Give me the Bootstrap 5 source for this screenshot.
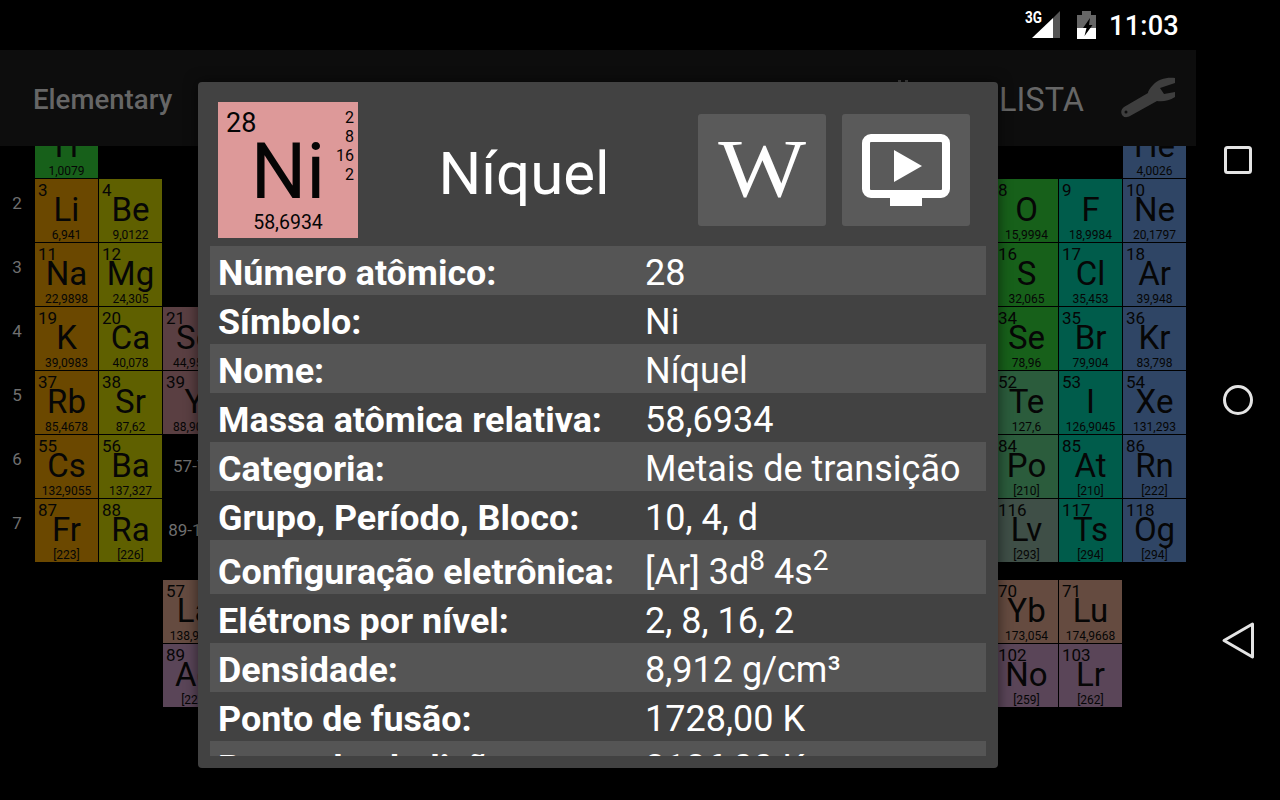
<!DOCTYPE html>
<html lang="pt">
<head>
<meta charset="utf-8">
<link href="https://cdn.jsdelivr.net/npm/bootstrap@5.3.0/dist/css/bootstrap.min.css" rel="stylesheet">
<style>
html,body{margin:0;background:#000;font-family:Roboto,"Liberation Sans",sans-serif;width:1280px;height:800px;overflow:hidden}
.screen{width:1280px;height:800px;position:relative}
.app-col{width:1196px;height:800px}
.nav-col{width:84px;height:800px}
.status-bar{height:50px;padding-right:17px;flex:none}
.clock{font-size:27.2px;font-weight:500;color:#fff;line-height:50px;margin-left:13.500px;margin-top:1px;letter-spacing:.2px}
.action-bar{height:96px;background:#0d0d0d;color:#666;padding:0 20px 0 33px;flex:none}
.app-title{font-size:27.6px;font-weight:500;line-height:1;margin-top:4px}
.tab-marks{margin-left:auto;margin-right:91px;align-self:flex-start;margin-top:30px;flex:none}
.tab-lista{font-size:32.500px;font-weight:400;line-height:1;margin-right:36px;margin-top:4px}
.content-area{height:654px;overflow:hidden;flex:none}
.ptable{display:grid;grid-template-columns:34px repeat(18,63px);grid-template-rows:repeat(7,63px) 16px repeat(2,63px);gap:1px;margin-top:-31px}
.cell{height:63px;padding-top:3px;color:#060606;text-align:center;overflow:hidden;white-space:nowrap}
.cnum{display:block;font-size:17px;line-height:17px;text-align:left;padding-left:3px}
.csym{display:block;font-size:33px;line-height:36px;margin-top:-7px}
.cmass{display:block;font-size:12px;line-height:13px;margin-top:1px}
.plabel{grid-column:1;color:#6f6f6f;font-size:17px;text-align:center;padding-bottom:14px;align-self:center}
.series{color:#6f6f6f;font-size:17px;align-self:center;text-align:center;white-space:nowrap;grid-column:4}
.c1{grid-column:2}.c2{grid-column:3}.c3{grid-column:4}.c16{grid-column:17}.c17{grid-column:18}.c18{grid-column:19}
.r1{grid-row:1}.r2{grid-row:2}.r3{grid-row:3}.r4{grid-row:4}.r5{grid-row:5}.r6{grid-row:6}.r7{grid-row:7}.r9{grid-row:9}.r10{grid-row:10}
.f-alk{background:#6b4800}.f-ear{background:#5f6000}.f-tra{background:#5a3f42}.f-lan{background:#654b40}.f-act{background:#5a4558}
.f-non{background:#17601a}.f-hal{background:#005c4b}.f-nob{background:#2f4565}.f-met{background:#2b5c3c}.f-unk{background:#3f4f47}
.dialog-box{position:absolute;left:198px;top:82px;width:800px;height:686px;background:#424242;border-radius:4px;box-shadow:0 0 14px rgba(0,0,0,.55);padding:20px 12px 12px;color:#fff}
.head-row{height:144px;flex:none}
.tile{width:140px;height:136px;background:#dd9999;color:#050505;margin-left:8px;position:relative;flex:none}
.t-num{position:absolute;left:8px;top:5px;font-size:27px;line-height:32px}
.t-sym{position:absolute;left:0;right:0;top:25px;text-align:center;font-size:78px;line-height:90px}
.t-mass{position:absolute;left:0;right:0;bottom:2.500px;text-align:center;font-size:19.500px;line-height:26px}
.t-shell{position:absolute;right:4px;top:6px;text-align:right;font-size:16px;line-height:19px}
.el-name{font-size:60px;line-height:1;width:332px;text-align:center;flex:none}
.sq-btn{width:128px;height:112px;background:#5a5a5a;border-radius:3px;flex:none;margin-top:12px}
.wiki-w{font-family:"Liberation Serif",serif;font-size:83px;line-height:1;color:#fff;display:block;transform:scaleX(1.12);margin-top:-3px}
.btn-end-gap{width:16px;flex:none}
.scroller{height:510px;overflow:hidden;flex:none;width:776px}
.info-row{height:49px;padding-left:8px;line-height:55px;white-space:nowrap}
.info-row.odd{background:#555}
.info-row.tall{height:54px;line-height:64px}
.lab{width:428px;flex:none;font-size:35.900px;font-weight:700;margin-right:-1px}
.val{font-size:36px;font-weight:400}
.val sup{font-size:28px;top:-.5em;line-height:0}
.back-ico{display:block}
</style>
</head>
<body>
<div class="screen d-flex">
  <div class="app-col d-flex flex-column">
    <div class="status-bar d-flex justify-content-end align-items-center">
      <svg width="36" height="30" viewBox="0 0 36 30" aria-label="3G">
        <polygon points="7,28 28,8 28,28" fill="#fff"/>
        <polygon points="28,8 35,1 35,28 28,28" fill="#555"/>
        <text x="0" y="13" font-family="Roboto" font-weight="700" font-size="16" textLength="17" lengthAdjust="spacingAndGlyphs" fill="#fff">3G</text>
      </svg>
      <svg width="19" height="28" viewBox="0 0 19 28" class="ms-3" aria-label="bateria">
        <path d="M5 0h9v4h5v24H0V4h5z" fill="#666"/>
        <path d="M0 17h19v11H0z" fill="#fff"/>
        <path d="M13 7 6 17h3.500l-2 8 8-11H12z" fill="#000"/>
      </svg>
      <span class="clock">11:03</span>
    </div>
    <div class="action-bar d-flex align-items-center">
      <span class="app-title">Elementary</span>
      <svg class="tab-marks" width="10" height="2" viewBox="0 0 10 2" aria-hidden="true"><rect width="3" height="2" fill="#444"/><rect x="7" width="3" height="2" fill="#444"/></svg>
      <span class="tab-lista">LISTA</span>
      <svg width="56" height="42" viewBox="0 0 56 42" aria-label="Ajustes">
        <path d="M55 1C47 0 38 2 33 8 30 11 28 14 28 16L4 30C0 33 1 37 3 39 5 41 8 40 10 39L37 24C42 25 49 24 55 20V15L44 17 40 11 55 6Z" fill="#3e3e3e"/>
        <circle cx="6" cy="35" r="1.500" fill="#0d0d0d"/>
      </svg>
    </div>
    <div class="content-area">
      <div class="ptable">
        <span class="plabel r2">2</span><span class="plabel r3">3</span><span class="plabel r4">4</span><span class="plabel r5">5</span><span class="plabel r6">6</span><span class="plabel r7">7</span>

        <div class="cell c1 r1 f-non"><span class="cnum">1</span><span class="csym">H</span><span class="cmass">1,0079</span></div>
        <div class="cell c18 r1 f-nob"><span class="cnum">2</span><span class="csym">He</span><span class="cmass">4,0026</span></div>

        <div class="cell c1 r2 f-alk"><span class="cnum">3</span><span class="csym">Li</span><span class="cmass">6,941</span></div>
        <div class="cell c2 r2 f-ear"><span class="cnum">4</span><span class="csym">Be</span><span class="cmass">9,0122</span></div>
        <div class="cell c16 r2 f-non"><span class="cnum">8</span><span class="csym">O</span><span class="cmass">15,9994</span></div>
        <div class="cell c17 r2 f-hal"><span class="cnum">9</span><span class="csym">F</span><span class="cmass">18,9984</span></div>
        <div class="cell c18 r2 f-nob"><span class="cnum">10</span><span class="csym">Ne</span><span class="cmass">20,1797</span></div>

        <div class="cell c1 r3 f-alk"><span class="cnum">11</span><span class="csym">Na</span><span class="cmass">22,9898</span></div>
        <div class="cell c2 r3 f-ear"><span class="cnum">12</span><span class="csym">Mg</span><span class="cmass">24,305</span></div>
        <div class="cell c16 r3 f-non"><span class="cnum">16</span><span class="csym">S</span><span class="cmass">32,065</span></div>
        <div class="cell c17 r3 f-hal"><span class="cnum">17</span><span class="csym">Cl</span><span class="cmass">35,453</span></div>
        <div class="cell c18 r3 f-nob"><span class="cnum">18</span><span class="csym">Ar</span><span class="cmass">39,948</span></div>

        <div class="cell c1 r4 f-alk"><span class="cnum">19</span><span class="csym">K</span><span class="cmass">39,0983</span></div>
        <div class="cell c2 r4 f-ear"><span class="cnum">20</span><span class="csym">Ca</span><span class="cmass">40,078</span></div>
        <div class="cell c3 r4 f-tra"><span class="cnum">21</span><span class="csym">Sc</span><span class="cmass">44,9559</span></div>
        <div class="cell c16 r4 f-non"><span class="cnum">34</span><span class="csym">Se</span><span class="cmass">78,96</span></div>
        <div class="cell c17 r4 f-hal"><span class="cnum">35</span><span class="csym">Br</span><span class="cmass">79,904</span></div>
        <div class="cell c18 r4 f-nob"><span class="cnum">36</span><span class="csym">Kr</span><span class="cmass">83,798</span></div>

        <div class="cell c1 r5 f-alk"><span class="cnum">37</span><span class="csym">Rb</span><span class="cmass">85,4678</span></div>
        <div class="cell c2 r5 f-ear"><span class="cnum">38</span><span class="csym">Sr</span><span class="cmass">87,62</span></div>
        <div class="cell c3 r5 f-tra"><span class="cnum">39</span><span class="csym">Y</span><span class="cmass">88,9059</span></div>
        <div class="cell c16 r5 f-met"><span class="cnum">52</span><span class="csym">Te</span><span class="cmass">127,6</span></div>
        <div class="cell c17 r5 f-hal"><span class="cnum">53</span><span class="csym">I</span><span class="cmass">126,9045</span></div>
        <div class="cell c18 r5 f-nob"><span class="cnum">54</span><span class="csym">Xe</span><span class="cmass">131,293</span></div>

        <div class="cell c1 r6 f-alk"><span class="cnum">55</span><span class="csym">Cs</span><span class="cmass">132,9055</span></div>
        <div class="cell c2 r6 f-ear"><span class="cnum">56</span><span class="csym">Ba</span><span class="cmass">137,327</span></div>
        <span class="series r6">57-71</span>
        <div class="cell c16 r6 f-met"><span class="cnum">84</span><span class="csym">Po</span><span class="cmass">[210]</span></div>
        <div class="cell c17 r6 f-hal"><span class="cnum">85</span><span class="csym">At</span><span class="cmass">[210]</span></div>
        <div class="cell c18 r6 f-nob"><span class="cnum">86</span><span class="csym">Rn</span><span class="cmass">[222]</span></div>

        <div class="cell c1 r7 f-alk"><span class="cnum">87</span><span class="csym">Fr</span><span class="cmass">[223]</span></div>
        <div class="cell c2 r7 f-ear"><span class="cnum">88</span><span class="csym">Ra</span><span class="cmass">[226]</span></div>
        <span class="series r7">89-103</span>
        <div class="cell c16 r7 f-unk"><span class="cnum">116</span><span class="csym">Lv</span><span class="cmass">[293]</span></div>
        <div class="cell c17 r7 f-hal"><span class="cnum">117</span><span class="csym">Ts</span><span class="cmass">[294]</span></div>
        <div class="cell c18 r7 f-nob"><span class="cnum">118</span><span class="csym">Og</span><span class="cmass">[294]</span></div>

        <div class="cell c3 r9 f-lan"><span class="cnum">57</span><span class="csym">La</span><span class="cmass">138,9055</span></div>
        <div class="cell c16 r9 f-lan"><span class="cnum">70</span><span class="csym">Yb</span><span class="cmass">173,054</span></div>
        <div class="cell c17 r9 f-lan"><span class="cnum">71</span><span class="csym">Lu</span><span class="cmass">174,9668</span></div>
        <div class="cell c3 r10 f-act"><span class="cnum">89</span><span class="csym">Ac</span><span class="cmass">[227]</span></div>
        <div class="cell c16 r10 f-act"><span class="cnum">102</span><span class="csym">No</span><span class="cmass">[259]</span></div>
        <div class="cell c17 r10 f-act"><span class="cnum">103</span><span class="csym">Lr</span><span class="cmass">[262]</span></div>
      </div>
    </div>
  </div>
  <div class="nav-col d-flex flex-column align-items-center">
    <svg width="84" height="800" viewBox="0 0 84 800" aria-label="navegação" class="back-ico">
      <rect x="29.500" y="147.500" width="25" height="25" rx="2" fill="none" stroke="#e4e4e4" stroke-width="3"/>
      <circle cx="42" cy="400" r="13.500" fill="none" stroke="#e4e4e4" stroke-width="3"/>
      <path d="M56.500 624 L28 640.500 L56.500 657 Z" fill="none" stroke="#e4e4e4" stroke-width="3" stroke-linejoin="round"/>
    </svg>
  </div>

  <div class="dialog-box d-flex flex-column">
    <div class="head-row d-flex">
      <div class="tile">
        <span class="t-num">28</span>
        <span class="t-sym">Ni</span>
        <span class="t-mass">58,6934</span>
        <span class="t-shell">2<br>8<br>16<br>2</span>
      </div>
      <div class="el-name align-self-center">Níquel</div>
      <div class="sq-btn d-flex align-items-center justify-content-center ms-auto"><span class="wiki-w">W</span></div>
      <div class="sq-btn d-flex align-items-center justify-content-center ms-3">
        <svg width="88" height="72" viewBox="0 0 88 72" aria-label="vídeo">
          <rect x="4" y="4" width="80" height="56" rx="5" fill="none" stroke="#fff" stroke-width="8"/>
          <rect x="28" y="64" width="32" height="8" fill="#fff"/>
          <polygon points="32,16 60,32 32,48" fill="#fff"/>
        </svg>
      </div>
      <div class="btn-end-gap"></div>
    </div>
    <div class="scroller">
      <div class="info-row odd d-flex"><span class="lab">Número atômico:</span><span class="val">28</span></div>
      <div class="info-row d-flex"><span class="lab">Símbolo:</span><span class="val">Ni</span></div>
      <div class="info-row odd d-flex"><span class="lab">Nome:</span><span class="val">Níquel</span></div>
      <div class="info-row d-flex"><span class="lab">Massa atômica relativa:</span><span class="val">58,6934</span></div>
      <div class="info-row odd d-flex"><span class="lab">Categoria:</span><span class="val">Metais de transição</span></div>
      <div class="info-row d-flex"><span class="lab">Grupo, Período, Bloco:</span><span class="val">10, 4, d</span></div>
      <div class="info-row tall odd d-flex"><span class="lab">Configuração eletrônica:</span><span class="val">[Ar] 3d<sup>8</sup> 4s<sup>2</sup></span></div>
      <div class="info-row d-flex"><span class="lab">Elétrons por nível:</span><span class="val">2, 8, 16, 2</span></div>
      <div class="info-row odd d-flex"><span class="lab">Densidade:</span><span class="val">8,912 g/cm³</span></div>
      <div class="info-row d-flex"><span class="lab">Ponto de fusão:</span><span class="val">1728,00 K</span></div>
      <div class="info-row odd d-flex"><span class="lab">Ponto de ebulição:</span><span class="val">3186,00 K</span></div>
    </div>
  </div>
</div>
<script src="https://cdn.jsdelivr.net/npm/bootstrap@5.3.0/dist/js/bootstrap.bundle.min.js"></script>
</body>
</html>
